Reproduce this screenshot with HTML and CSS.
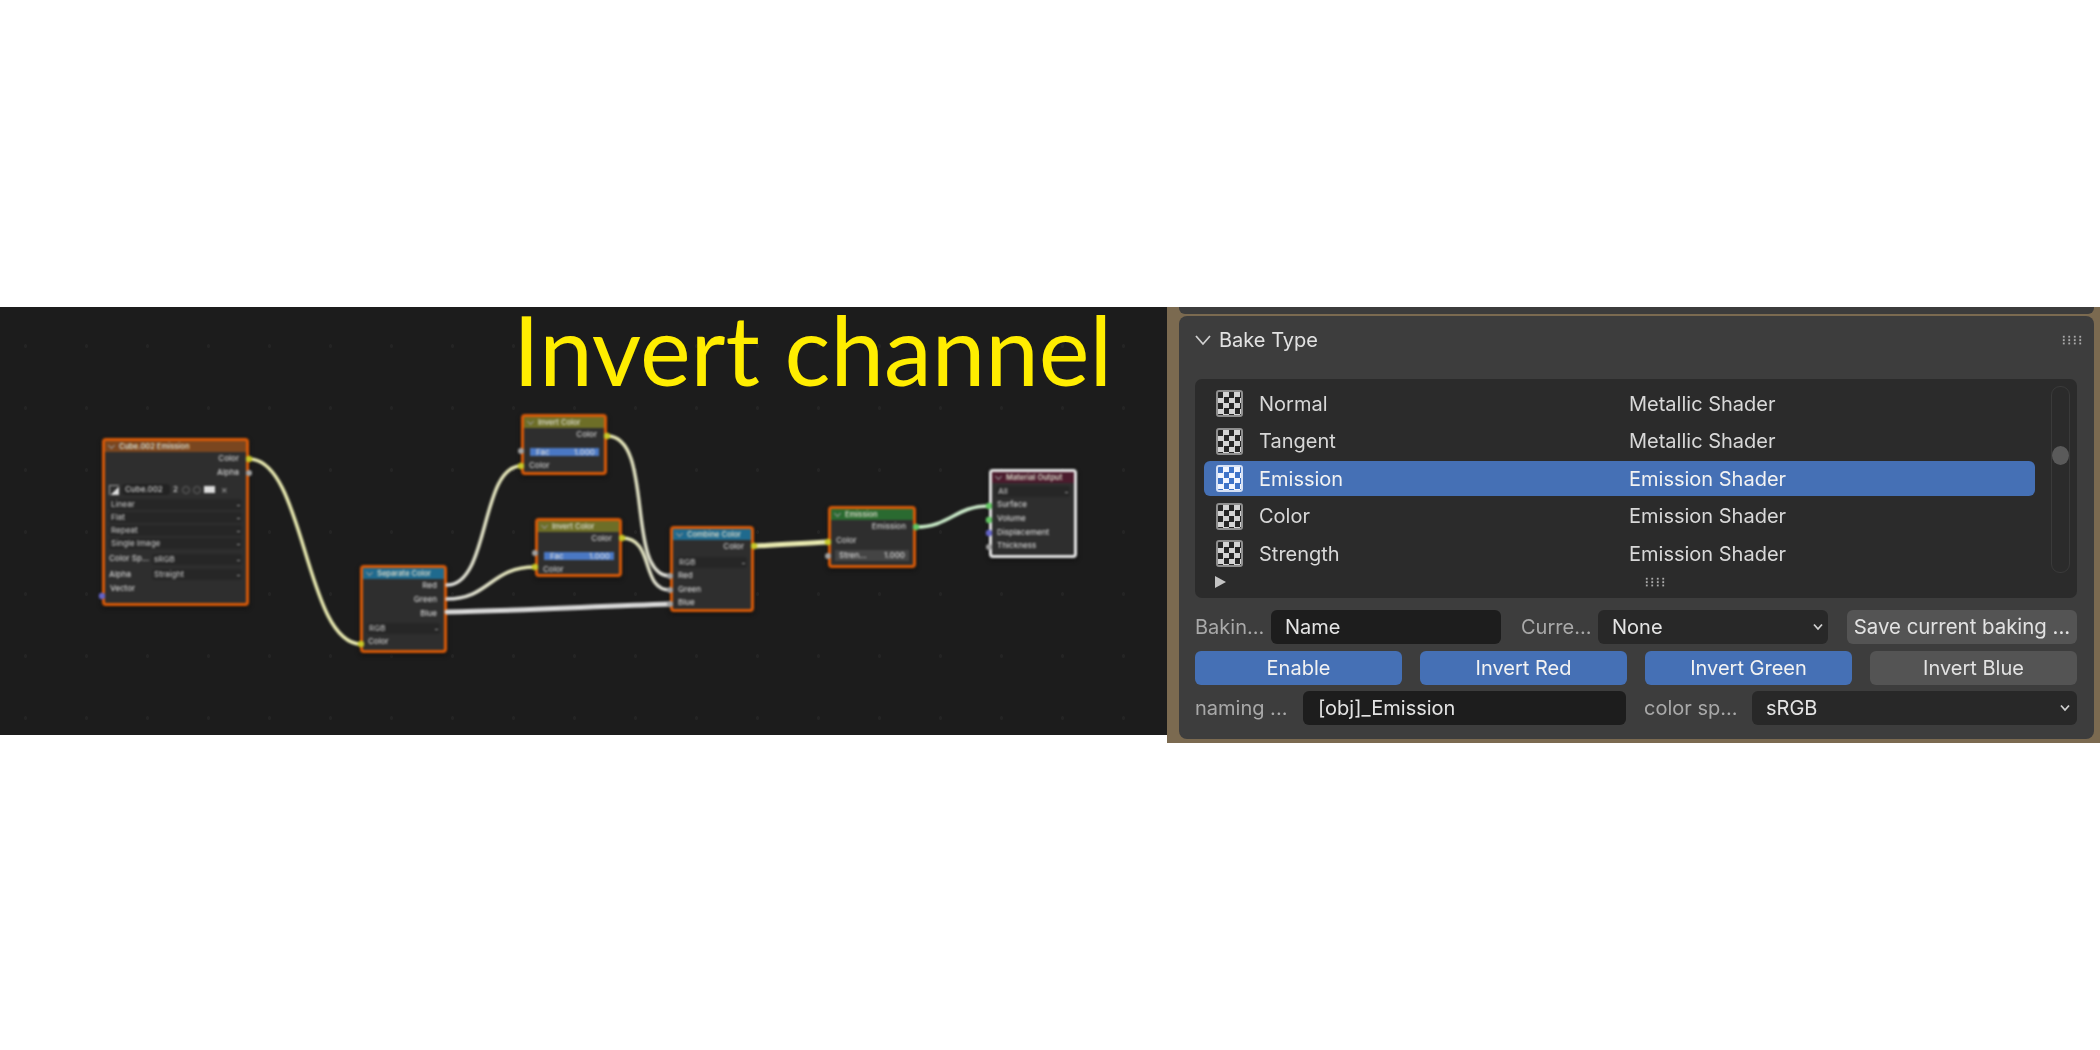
FILE: index.html
```html
<!DOCTYPE html>
<html lang="en">
<head>
    <meta charset="UTF-8">
    <title>Invert channel</title>
    <link rel="stylesheet" href="styles.css">
</head>
<body>
    <div class="shot">

        <!-- node editor -->
        <div class="graph">
            <div class="nodes">
                <div class="node n-image">
                    <div class="head h-image"><span class="fold"></span>Cube.002 Emission</div>
                    <div class="row out">Color</div>
                    <div class="row out">Alpha</div>
                    <div class="tools">
                        <span class="t-pic"></span>
                        <span class="t-name">Cube.002</span>
                        <span class="t-num">2</span>
                        <span class="t-ring"></span>
                        <span class="t-ring"></span>
                        <span class="t-folder"></span>
                        <span class="t-x">×</span>
                    </div>
                    <div class="field">Linear<i></i></div>
                    <div class="field">Flat<i></i></div>
                    <div class="field">Repeat<i></i></div>
                    <div class="field">Single Image<i></i></div>
                    <div class="pair"><span>Color Sp...</span><div class="field">sRGB<i></i></div></div>
                    <div class="pair"><span>Alpha</span><div class="field">Straight<i></i></div></div>
                    <div class="row">Vector</div>
                </div>

                <div class="node n-sep">
                    <div class="head h-conv"><span class="fold"></span>Separate Color</div>
                    <div class="row out">Red</div>
                    <div class="row out">Green</div>
                    <div class="row out">Blue</div>
                    <div class="field top-gap">RGB<i></i></div>
                    <div class="row">Color</div>
                </div>

                <div class="node n-inv1">
                    <div class="head h-inv"><span class="fold"></span>Invert Color</div>
                    <div class="row out">Color</div>
                    <div class="fac"><span>Fac</span><span>1.000</span></div>
                    <div class="row">Color</div>
                </div>

                <div class="node n-inv2">
                    <div class="head h-inv"><span class="fold"></span>Invert Color</div>
                    <div class="row out">Color</div>
                    <div class="fac"><span>Fac</span><span>1.000</span></div>
                    <div class="row">Color</div>
                </div>

                <div class="node n-comb">
                    <div class="head h-conv"><span class="fold"></span>Combine Color</div>
                    <div class="row out">Color</div>
                    <div class="field top-gap">RGB<i></i></div>
                    <div class="row">Red</div>
                    <div class="row">Green</div>
                    <div class="row">Blue</div>
                </div>

                <div class="node n-emit">
                    <div class="head h-emit"><span class="fold"></span>Emission</div>
                    <div class="row out">Emission</div>
                    <div class="row">Color</div>
                    <div class="fac grey"><span>Stren...</span><span>1.000</span></div>
                </div>

                <div class="node n-output">
                    <div class="head h-output"><span class="fold"></span>Material Output</div>
                    <div class="field top-gap">All<i></i></div>
                    <div class="row">Surface</div>
                    <div class="row">Volume</div>
                    <div class="row">Displacement</div>
                    <div class="row">Thickness</div>
                </div>

                <svg class="wires" width="1167" height="428" viewBox="0 307 1167 428">
                    <defs>
                        <linearGradient id="cream-white"><stop offset="0" stop-color="#e8e9b0"/><stop offset="1" stop-color="#d8d8d8"/></linearGradient>
                        <linearGradient id="white-cream"><stop offset="0" stop-color="#dcdcdc"/><stop offset="1" stop-color="#e8e9b0"/></linearGradient>
                        <linearGradient id="cream-green"><stop offset="0" stop-color="#c8ecc8"/><stop offset="1" stop-color="#cfeccd"/></linearGradient>
                    </defs>
                    <path class="wire" stroke="#e8e9b0" d="M249 459 C305 459 305 644 361 644"/>
                    <path class="wire" stroke="url(#white-cream)" d="M447 585 C490 585 480 466 521 466"/>
                    <path class="wire" stroke="url(#white-cream)" d="M447 599 C490 599 490 567 535 567"/>
                    <path class="wire fat" stroke="#d8d8d8" d="M447 612 C520 611 600 606 670 604"/>
                    <path class="wire" stroke="url(#cream-white)" d="M607 436 C655 436 625 576 670 576"/>
                    <path class="wire" stroke="url(#cream-white)" d="M622 538 C655 538 640 590 670 590"/>
                    <path class="wire fat" stroke="#e8e9b0" d="M754 546 C780 545 805 543 828 542"/>
                    <path class="wire" stroke="url(#cream-green)" d="M916 527 C950 527 955 506 989 506"/>

                    <circle cx="249" cy="459" r="3.2" fill="#c7c729"/>
                    <circle cx="249" cy="473" r="3" fill="#a1a1a1"/>
                    <circle cx="102" cy="596" r="3.2" fill="#6363c7"/>
                    <circle cx="361" cy="644" r="3.2" fill="#c7c729"/>
                    <circle cx="521" cy="451" r="3" fill="#a1a1a1"/>
                    <circle cx="521" cy="466" r="3.2" fill="#c7c729"/>
                    <circle cx="607" cy="436" r="3.2" fill="#c7c729"/>
                    <circle cx="535" cy="553" r="3" fill="#a1a1a1"/>
                    <circle cx="535" cy="567" r="3.2" fill="#c7c729"/>
                    <circle cx="622" cy="538" r="3.2" fill="#c7c729"/>
                    <circle cx="670" cy="576" r="3" fill="#a1a1a1"/>
                    <circle cx="670" cy="590" r="3" fill="#a1a1a1"/>
                    <circle cx="670" cy="604" r="3" fill="#a1a1a1"/>
                    <circle cx="754" cy="546" r="3.2" fill="#c7c729"/>
                    <circle cx="828" cy="542" r="3.2" fill="#c7c729"/>
                    <circle cx="828" cy="556" r="3" fill="#a1a1a1"/>
                    <circle cx="916" cy="527" r="3.2" fill="#63c763"/>
                    <circle cx="989" cy="506" r="3.2" fill="#63c763"/>
                    <circle cx="989" cy="520" r="3.2" fill="#63c763"/>
                    <circle cx="989" cy="533" r="3.2" fill="#6363c7"/>
                    <circle cx="989" cy="547" r="3" fill="#a1a1a1"/>
                </svg>
            </div>
            <div class="title">Invert channel</div>
        </div>

        <!-- bake type panel -->
        <div class="side">
            <div class="sliver"></div>
            <div class="panel">
                <div class="panel-head">
                    <svg class="chev" width="18" height="12" viewBox="0 0 18 12"><path d="M2 2 L9 10 L16 2"/></svg>
                    <span>Bake Type</span>
                    <span class="grip head-grip"></span>
                </div>

                <div class="list">
                    <div class="list-top">
                        <div class="rows">
                            <div class="item"><span class="check"></span><span class="name">Normal</span><span>Metallic Shader</span></div>
                            <div class="item"><span class="check"></span><span class="name">Tangent</span><span>Metallic Shader</span></div>
                            <div class="item on"><span class="check"></span><span class="name">Emission</span><span>Emission Shader</span></div>
                            <div class="item"><span class="check"></span><span class="name">Color</span><span>Emission Shader</span></div>
                            <div class="item"><span class="check"></span><span class="name">Strength</span><span>Emission Shader</span></div>
                        </div>
                        <div class="scroll"><div class="thumb"></div></div>
                    </div>
                    <div class="list-foot">
                        <span class="tri"></span>
                        <span class="grip foot-grip"></span>
                    </div>
                </div>

                <div class="line line-1">
                    <span class="label">Bakin...</span>
                    <div class="input">Name</div>
                    <span class="label curr">Curre...</span>
                    <div class="input select">None<svg class="mini" width="12" height="8" viewBox="0 0 12 8"><path d="M2 1.5 L6 6 L10 1.5"/></svg></div>
                    <div class="btn save">Save current baking ...</div>
                </div>
                <div class="line line-2">
                    <div class="btn blue">Enable</div>
                    <div class="btn blue">Invert Red</div>
                    <div class="btn blue">Invert Green</div>
                    <div class="btn">Invert Blue</div>
                </div>
                <div class="line line-3">
                    <span class="label">naming ...</span>
                    <div class="input">[obj]_Emission</div>
                    <span class="label">color sp...</span>
                    <div class="input select">sRGB<svg class="mini" width="12" height="8" viewBox="0 0 12 8"><path d="M2 1.5 L6 6 L10 1.5"/></svg></div>
                </div>
            </div>
        </div>

    </div>
</body>
</html>
```

FILE: styles.css
```css
* {
    box-sizing: border-box;
}

body {
    margin: 0;
    background: #fff;
    font-family: Inter, "Liberation Sans", sans-serif;
}

.shot {
    display: flex;
    align-items: flex-start;
    padding-top: 307px;
}

/* left picture */
.graph {
    position: relative;
    width: 1167px;
    height: 428px;
    flex: none;
    background-color: #1c1c1c;
    background-image: radial-gradient(circle, #242424 1.5px, transparent 2px);
    background-size: 61px 62px;
    background-position: -5px 8px;
}

.nodes {
    position: absolute;
    inset: 0;
    filter: blur(0.9px);
}

.title {
    position: absolute;
    left: 513px;
    top: 0;
    color: #ffed00;
    font-family: Lato, sans-serif;
    font-size: 96px;
    line-height: 84px;
    white-space: nowrap;
}

.wires {
    position: absolute;
    left: 0;
    top: 0;
}

.wire {
    fill: none;
    stroke-width: 3.5;
    stroke-linecap: round;
}

.wire.fat {
    stroke-width: 5;
}

.node {
    position: absolute;
    border: 3px solid #d85a08;
    border-radius: 4px;
    background: #2e2e2e;
    color: #d0d0d0;
    font-size: 8px;
    font-weight: 500;
    line-height: 13.8px;
    box-shadow: 0 2px 4px #111;
}

.n-image { left: 102px; top: 131px; width: 147px; height: 168px; }
.n-sep { left: 360px; top: 258px; width: 87px; height: 88px; }
.n-inv1 { left: 521px; top: 107px; width: 86px; height: 61px; }
.n-inv2 { left: 535px; top: 211px; width: 87px; height: 59px; }
.n-comb { left: 670px; top: 219px; width: 84px; height: 86px; }
.n-emit { left: 828px; top: 199px; width: 88px; height: 62px; }
.n-output { left: 989px; top: 162px; width: 88px; height: 89px; border-color: #e6e6e6; }

.head {
    display: flex;
    align-items: center;
    gap: 5px;
    height: 11px;
    padding-left: 4px;
    color: #d8d8c8;
    font-size: 7.5px;
    font-weight: 600;
    white-space: nowrap;
    overflow: hidden;
}

.h-image { background: #7a461f; }
.h-conv { background: #1f6a8e; }
.h-inv { background: #6d6e27; }
.h-emit { background: #2a6a30; }
.h-output { background: #4b1b2d; }

.fold {
    width: 5px;
    height: 5px;
    flex: none;
    margin-top: -2px;
    border-right: 1px solid #999;
    border-bottom: 1px solid #999;
    transform: rotate(45deg);
}

.row {
    height: 13.8px;
    padding: 0 5px;
    white-space: nowrap;
}

.row.out {
    text-align: right;
    padding-right: 7px;
}

.field {
    position: relative;
    height: 11px;
    margin: 2.2px 4px;
    padding-left: 2px;
    border-radius: 2px;
    background: #262626;
    line-height: 11px;
    color: #bcbcbc;
    white-space: nowrap;
}

.field i {
    position: absolute;
    right: 2px;
    top: 6px;
    width: 3px;
    height: 1px;
    background: #999;
}

.field.top-gap {
    margin: 3px 4px 1px;
}

.pair {
    display: flex;
    align-items: center;
    padding-left: 4px;
}

.pair span {
    width: 41px;
    flex: none;
}

.pair .field {
    flex: 1;
    margin-left: 2px;
}

.tools {
    display: flex;
    align-items: center;
    gap: 3px;
    height: 14px;
    padding: 0 4px;
    margin-top: 3px;
}

.t-pic {
    width: 10px;
    height: 10px;
    border-top: 1px solid #999;
    border-left: 1px solid #999;
    background: linear-gradient(135deg, transparent 55%, #ddd 55%);
}

.t-name {
    width: 48px;
    padding-left: 3px;
    border-radius: 4px;
    background: #222;
    line-height: 11px;
}

.t-num { width: 6px; }

.t-ring {
    width: 8px;
    height: 8px;
    border: 1px solid #666;
    border-radius: 50%;
}

.t-folder {
    width: 11px;
    height: 7px;
    background: #ddd;
}

.t-x {
    margin-left: 3px;
    font-size: 10px;
    color: #999;
}

.fac {
    display: flex;
    justify-content: space-between;
    height: 8px;
    margin: 6px 5px 3px 6px;
    padding: 0 4px 0 6px;
    background: #4a78c4;
    color: #d8d8d8;
    line-height: 8px;
    white-space: nowrap;
}

.fac.grey {
    height: 11px;
    margin: 2px 4px 0;
    padding: 0 4px;
    background: #444;
    line-height: 11px;
}

/* right picture */
.side {
    width: 933px;
    height: 436px;
    flex: none;
    padding: 0 6px 4px 12px;
    background: #7b6a50;
}

.sliver {
    height: 7px;
    background: #3c3c3c;
    border-radius: 0 0 6px 6px;
}

.panel {
    height: 423px;
    margin-top: 2px;
    padding: 0 17px 0 16px;
    border-radius: 8px;
    background: #3d3d3d;
    color: #d8d8d8;
    font-size: 20px;
    filter: blur(0.5px);
}

.panel-head {
    display: flex;
    align-items: center;
    height: 48px;
    margin-bottom: 15px;
    color: #e2e2e2;
}

.chev {
    margin-left: -1px;
    margin-right: 7px;
}

.chev path,
.mini path {
    fill: none;
    stroke: #d0d0d0;
    stroke-width: 1.8;
}

.grip {
    display: block;
    width: 22px;
    height: 10px;
    background-image: radial-gradient(circle, #aaa 1px, transparent 1.4px);
    background-size: 5.5px 3.4px;
}

.head-grip {
    margin-left: auto;
    margin-right: -6px;
}

.list {
    height: 219px;
    padding: 7px 7px 0 9px;
    border-radius: 7px;
    background: #2b2b2b;
}

.list-top {
    display: flex;
    gap: 16px;
}

.rows {
    display: flex;
    flex-direction: column;
    gap: 2.5px;
    width: 831px;
}

.item {
    display: flex;
    align-items: center;
    height: 35px;
    padding-left: 12px;
    border-radius: 6px;
}

.item.on {
    background: #4570b5;
    color: #f2f2f2;
}

.name {
    width: 370px;
    margin-left: 16px;
}

.check {
    width: 27px;
    height: 27px;
    flex: none;
    border: 2.5px solid #8f8f8f;
    border-radius: 3px;
    background: repeating-conic-gradient(#d4d4d4 0 25%, #262626 0 50%) 0 0 / 11px 11px;
}

.on .check {
    border-color: #d5e0f4;
    background: repeating-conic-gradient(#f2f6ff 0 25%, #3f74c8 0 50%) 0 0 / 11px 11px;
}

.scroll {
    position: relative;
    width: 19px;
    height: 187px;
    border: 1px solid #3a3a3a;
    border-radius: 9px;
}

.thumb {
    position: absolute;
    left: 0;
    top: 59px;
    width: 17px;
    height: 19px;
    border-radius: 50%;
    background: #5a5a5a;
}

.list-foot {
    display: flex;
    align-items: center;
    height: 18px;
    padding-left: 11px;
}

.tri {
    width: 0;
    height: 0;
    border-left: 11px solid #c4c4c4;
    border-top: 6px solid transparent;
    border-bottom: 6px solid transparent;
}

.foot-grip {
    margin-left: 418px;
}

.line {
    display: flex;
    align-items: center;
    height: 34px;
}

.line-1 {
    margin-top: 12px;
}

.line-2 {
    gap: 18px;
    margin-top: 7px;
}

.line-3 {
    margin-top: 6px;
}

.label {
    flex: none;
    margin-bottom: 1px;
    color: #a9a9a9;
    white-space: nowrap;
}

.input {
    display: flex;
    align-items: center;
    justify-content: space-between;
    height: 34px;
    flex: none;
    padding: 0 6px 1px 14px;
    border-radius: 6px;
    background: #1d1d1d;
    color: #e4e4e4;
}

.select {
    background: #282828;
}

.line-1 .label { width: 76px; }
.line-1 .curr { width: 77px; }
.line-1 .input { width: 230px; margin-right: 20px; }
.line-1 .select { margin-right: 19px; padding-right: 4px; }
.line-3 .label { width: 108px; }
.line-3 .input { width: 323px; margin-right: 18px; padding-left: 15px; }
.line-3 .select { width: 325px; margin-right: 0; background: #282828; padding-left: 14px; }

.btn {
    display: flex;
    align-items: center;
    justify-content: center;
    height: 34px;
    flex: 1;
    padding-bottom: 1px;
    border-radius: 6px;
    background: #545454;
    color: #e2e2e2;
    white-space: nowrap;
}

.btn.save {
    flex: none;
    width: 230px;
    font-size: 20.4px;
}

.line-2 .btn {
    width: 207px;
}

.btn.blue {
    background: #4570b5;
    color: #f2f2f2;
}
```
